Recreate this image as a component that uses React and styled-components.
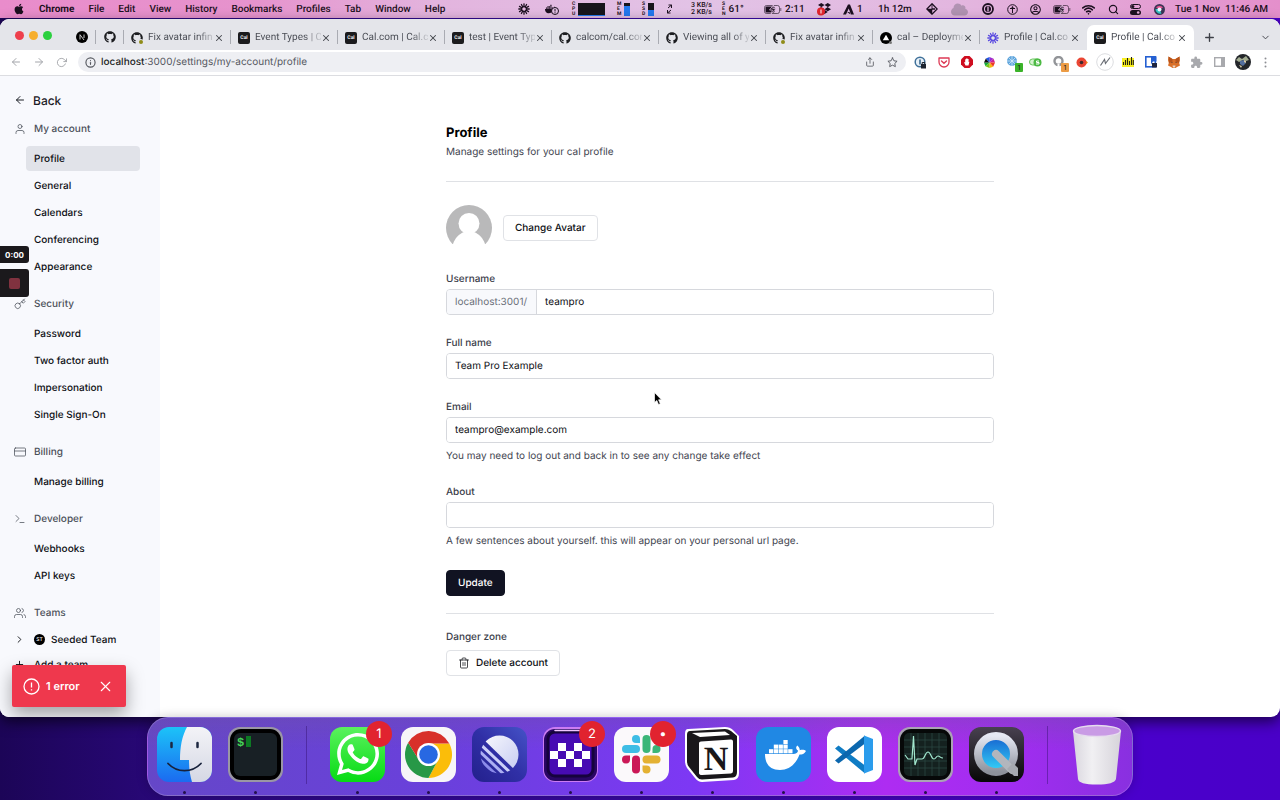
import React, { useState } from 'react'
import styled, { createGlobalStyle } from 'styled-components'
import {
  FiArrowLeft, FiArrowRight, FiUser, FiUsers, FiKey, FiCreditCard, FiTerminal, FiTrash2,
  FiChevronRight, FiChevronDown, FiPlus, FiX, FiRotateCw, FiShare, FiStar, FiInfo, FiSearch, FiWifi,
} from 'react-icons/fi'
import { FaApple, FaGithub, FaDocker, FaDropbox, FaWhatsapp, FaCloud, FaRegUserCircle } from 'react-icons/fa'
import { MdExtension } from 'react-icons/md'

const GlobalStyle = createGlobalStyle`
  * {
    box-sizing: border-box;
  }

  body {
    margin: 0;
    font-family: Inter, sans-serif;
    font-size: 10px;
    color: #111827;
    text-rendering: geometricPrecision;
  }

  button, input {
    font-family: inherit;
    text-rendering: inherit;
  }

  button {
    border: 0;
    padding: 0;
    background: none;
    color: inherit;
  }

  svg {
    flex-shrink: 0;
  }
`

const Desktop = styled.div`
  position: relative;
  display: flex;
  flex-direction: column;
  min-height: 100vh;
  overflow: hidden;
  background: linear-gradient(90deg, #1c0557 0%, #2a087c 14%, #3a08a8 60%, #4a00cc 88%, #4a00c8 100%);
`

/* Menu bar */

const MenuBar = styled.header`
  display: flex;
  align-items: center;
  justify-content: space-between;
  height: 18px;
  margin-bottom: 1px;
  padding: 0 12px 0 13px;
  font-family: Roboto, sans-serif;
  font-size: 10px;
  font-weight: 500;
  color: #1c1020;
  white-space: nowrap;
  background: linear-gradient(90deg, #e98ccb 0%, #e693cd 20%, #e3b4de 34%, #e2c3e6 55%, #e3b6df 75%, #e48fcb 100%);
`

const Menus = styled.nav`
  display: flex;
  align-items: center;
  gap: 14px;
`

const MenuItem = styled.button`
  font-size: 10px;
  font-weight: ${props => (props.$bold ? 700 : 500)};
`

const Statuses = styled.div`
  display: flex;
  align-items: center;
`

const Status = styled.span`
  display: flex;
  align-items: center;
  gap: 3px;
  width: ${props => props.$w}px;
  height: 18px;
`

const Clock = styled.time`
  font-size: 10px;
`

const Stacked = styled.span`
  display: flex;
  flex-direction: column;
  font-size: 5px;
  line-height: 5px;
  font-weight: 700;
`

const Rates = styled.span`
  font-size: 7px;
  line-height: 7px;
`

const Graph = styled.span`
  width: ${props => props.$w}px;
  height: 13px;
  background: linear-gradient(0deg, #2378ee ${props => props.$fill}%, #18151c ${props => props.$fill}%);
`

/* Browser window */

const BrowserWindow = styled.div`
  display: flex;
  flex: 1;
  flex-direction: column;
  overflow: hidden;
  border-radius: 9px;
  background: #fff;
  box-shadow: 0 5px 14px rgba(0, 0, 0, 0.6);
`

const TabStrip = styled.div`
  display: flex;
  height: 31px;
  padding-top: 6px;
  font-family: Roboto, sans-serif;
  background: #e4e5ea;
`

const Lights = styled.div`
  display: flex;
  gap: 5px;
  width: 68px;
  padding: 6px 0 0 15px;
`

const Light = styled.button`
  width: 9px;
  height: 9px;
  border-radius: 50%;
  background: ${props => props.$color};
`

const PinnedTab = styled.button`
  display: flex;
  align-items: center;
  justify-content: center;
  width: 28px;
  height: 14px;
  margin-top: 5px;
  border-right: 1px solid #a9abb2;
`

const Tab = styled.div`
  display: flex;
  flex: 0 1 107px;
  align-items: center;
  min-width: 0;
  padding: 0 7px;
  border-radius: 7px 7px 0 0;
  background: ${props => (props.$active ? '#fff' : 'transparent')};
`

const TabTitle = styled.button`
  flex: 1;
  min-width: 0;
  margin: 0 0 0 5px;
  font-size: 10px;
  line-height: 14px;
  text-align: left;
  white-space: nowrap;
  color: #4a4d55;
  mask-image: linear-gradient(90deg, #000 74%, rgba(0, 0, 0, 0.15) 100%);
`

const TabClose = styled.button`
  display: flex;
  color: #43464d;
`

const TabDivider = styled.span`
  width: 1px;
  height: 14px;
  margin: 5px 0 0 -1px;
  background: ${props => (props.$hidden ? 'transparent' : '#a9abb2')};
`

const StripButton = styled.button`
  display: flex;
  align-items: center;
  justify-content: center;
  width: 30px;
  margin-left: ${props => (props.$end ? 'auto' : '0')};
  color: #3d4047;
`

const CalIcon = styled.span`
  display: flex;
  flex-shrink: 0;
  align-items: center;
  justify-content: center;
  width: 12px;
  height: 12px;
  border-radius: 2px;
  background: #1b1b1d;
  color: #fff;
  font-size: 5px;
  font-weight: 600;
`

const Toolbar = styled.div`
  display: flex;
  align-items: center;
  height: 26px;
  padding: 0 3px 1px 4px;
  border-bottom: 1px solid #dcdde1;
  background: #fff;
`

const ToolButton = styled.button`
  position: relative;
  display: flex;
  align-items: center;
  justify-content: center;
  width: 23px;
  height: 20px;
  color: ${props => (props.$dim ? '#a3a5aa' : '#55585f')};
`

const Omnibox = styled.div`
  display: flex;
  flex: 1;
  align-items: center;
  height: 20px;
  margin: 0 3px 0 5px;
  padding: 0 2px 0 7px;
  border-radius: 10px;
  background: #eeeff3;
  color: #55585f;
`

const Address = styled.span`
  flex: 1;
  margin-left: 5px;
  font-size: 10px;
  color: #55585f;

  b {
    font-weight: 500;
    color: #1d1f24;
  }
`

const CountBadge = styled.span`
  position: absolute;
  right: 1px;
  bottom: 0;
  width: 8px;
  height: 9px;
  border-radius: 1px;
  font-size: 7px;
  line-height: 9px;
  text-align: center;
  color: #222;
  background: ${props => props.$color};
`

/* Page */

const Page = styled.div`
  position: relative;
  display: flex;
  flex: 1;
`

const Sidebar = styled.aside`
  width: 160px;
  flex-shrink: 0;
  padding: 16px 20px 0 14px;
  background: #f8f9fd;
`

const BackLink = styled.a`
  display: flex;
  align-items: center;
  gap: 7px;
  height: 16px;
  margin-bottom: 13px;
  font-size: 12px;
  font-weight: 500;
  color: #1d2026;
  text-decoration: none;
`

const Section = styled.section`
  margin-bottom: 17px;
`

const SectionTitle = styled.h2`
  display: flex;
  align-items: center;
  gap: 8px;
  height: 16px;
  margin: 0;
  font-size: 10px;
  font-weight: 500;
  color: #4b5059;
`

const NavList = styled.div`
  display: flex;
  flex-direction: column;
  gap: 2px;
  margin-top: 9px;
  padding-left: 12px;
`

const NavLink = styled.a`
  height: 25px;
  padding: 0 8px;
  border-radius: 4px;
  font-weight: 500;
  line-height: 26px;
  color: #0c0e13;
  text-decoration: none;
  background: ${props => (props.$active ? '#e1e3e9' : 'transparent')};
`

const TeamRow = styled.a`
  display: flex;
  align-items: center;
  gap: 6px;
  height: 25px;
  font-weight: 500;
  color: #0c0e13;
  text-decoration: none;

  svg {
    margin-right: 3px;
  }
`

const Teams = styled.div`
  margin-top: 6px;
`

const TeamAvatar = styled.span`
  width: 11px;
  height: 11px;
  border-radius: 50%;
  background: #000;
  color: #fff;
  font-size: 5px;
  line-height: 12px;
  text-align: center;
`

const Main = styled.main`
  flex: 1;
  padding: 48px 24px 0;
`

const Content = styled.div`
  max-width: 548px;
  margin: 0 auto;
`

const Title = styled.h1`
  margin: 0;
  font-size: 13px;
  font-weight: 700;
  line-height: 18px;
  color: #000;
`

const Hint = styled.p`
  margin: ${props => props.$top || 0}px 0 0;
  font-size: 10px;
  line-height: 16px;
  color: #3f4550;
`

const Divider = styled.hr`
  margin: ${props => props.$top}px 0 ${props => props.$bottom}px;
  border: 0;
  border-top: 1px solid #dfe1e5;
`

const AvatarRow = styled.div`
  display: flex;
  align-items: center;
  gap: 11px;
`

const Button = styled.button`
  display: flex;
  align-items: center;
  gap: 6px;
  height: 26px;
  padding: 0 11px;
  border: 1px solid ${props => (props.$primary ? '#111322' : '#e0e2e6')};
  border-radius: 4px;
  background: ${props => (props.$primary ? '#111322' : '#fff')};
  color: ${props => (props.$primary ? '#fff' : '#0c0e13')};
  font-size: 10px;
  font-weight: 500;
`

const Field = styled.div`
  margin-top: 20px;
`

const Label = styled.label`
  display: block;
  margin: 0 0 2px;
  font-size: 10px;
  font-weight: 500;
  line-height: 16px;
  color: #3b404a;
`

const InputBox = styled.div`
  display: flex;
  height: 26px;
  overflow: hidden;
  border: 1px solid #d6d8dd;
  border-radius: 4px;
`

const Prefix = styled.span`
  padding: 0 9px 0 8px;
  border-right: 1px solid #d6d8dd;
  background: #f8f9fc;
  line-height: 24px;
  color: #6b7079;
`

const Input = styled.input`
  flex: 1;
  min-width: 0;
  padding: 0 8px;
  border: 0;
  outline: 0;
  background: #fff;
  color: #0c0e13;
  font-size: 10px;
`

const Actions = styled.div`
  margin-top: 21px;
`

const DangerZone = styled.section`
  display: flex;
  flex-direction: column;
  align-items: flex-start;
  gap: 3px;
`

/* Things floating above the page */

const Recorder = styled.div`
  position: absolute;
  top: 170px;
  left: 0;
  display: flex;
  flex-direction: column;
  gap: 6px;
  width: 29px;
`

const Timer = styled.span`
  height: 17px;
  border-radius: 0 3px 3px 0;
  background: #1b191c;
  color: #fff;
  font-size: 8px;
  font-weight: 700;
  line-height: 18px;
  text-align: center;
`

const StopButton = styled.button`
  display: flex;
  align-items: center;
  justify-content: center;
  height: 28px;
  border-radius: 0 3px 3px 0;
  background: #1b191c;

  &::before {
    content: '';
    width: 11px;
    height: 11px;
    border-radius: 2px;
    background: #80323f;
  }
`

const Toast = styled.div`
  position: absolute;
  left: 12px;
  bottom: 10px;
  display: flex;
  align-items: center;
  width: 114px;
  height: 42px;
  padding: 0 12px 0 11px;
  border-radius: 2px;
  background: #ef384d;
  color: #fff;
  font-size: 11px;
  font-weight: 600;
  box-shadow: 0 8px 18px rgba(0, 0, 0, 0.35);
`

const ToastText = styled.span`
  flex: 1;
  margin-left: 6px;
`

const ToastClose = styled.button`
  display: flex;
`

const Pointer = styled.svg`
  position: absolute;
  top: 316px;
  left: 654px;
`

/* Dock */

const DockArea = styled.footer`
  position: relative;
  display: flex;
  justify-content: center;
  padding-bottom: 4px;
`

const DockBar = styled.div`
  display: flex;
  align-items: center;
  gap: 16px;
  height: 79px;
  padding: 0 9px 4px;
  border: 1px solid rgba(255, 255, 255, 0.2);
  border-radius: 21px;
  background: linear-gradient(180deg, rgba(110, 80, 160, 0.35) 0%, transparent 40%),
    linear-gradient(90deg, #6547c8 0%, #6a40dc 30%, #7d38f4 55%, #ae2cf2 75%, #a12df0 88%, #8930e0 100%);
  box-shadow: 0 0 11px rgba(0, 0, 0, 0.22);
`

const DockApp = styled.button`
  position: relative;
  height: 55px;

  svg {
    display: block;
    overflow: visible;
  }
`

const RunningDot = styled.span`
  position: absolute;
  bottom: -12px;
  left: 26px;
  width: 3px;
  height: 3px;
  border-radius: 50%;
  background: #22104a;
`

const AppBadge = styled.span`
  position: absolute;
  top: -6px;
  right: -7px;
  width: 26px;
  height: 26px;
  border-radius: 50%;
  background: #e1232f;
  color: #fff;
  font-size: 13px;
  line-height: 26px;
  text-align: center;
`

const DockLine = styled.span`
  width: 1px;
  height: 58px;
  margin: 0 7px;
  background: rgba(50, 15, 110, 0.45);
`

const GithubStatus = () => (
  <svg width="12" height="12" viewBox="0 0 12 12">
    <FaGithub size={12} color="#1c1d20" />
    <circle cx="9.5" cy="10" r="3" fill="#e4e5ea" />
    <circle cx="10" cy="10" r="2" fill="#8f8c18" />
  </svg>
)

const NextIcon = () => (
  <svg width="12" height="12" viewBox="0 0 12 12">
    <circle cx="6" cy="6" r="6" fill="#000" />
    <path d="M4 8.5V3.7L8 9M8 3.5V7" fill="none" stroke="#ddd" strokeWidth="0.9" />
  </svg>
)

const VercelIcon = () => (
  <svg width="12" height="12" viewBox="0 0 12 12">
    <circle cx="6" cy="6" r="6" fill="#000" />
    <path d="M6 2.8L9.2 8.2H2.8z" fill="#fff" />
    <circle cx="10.5" cy="10.5" r="1.5" fill="#777" />
  </svg>
)

const Burst = ({ size = 12, color = '#5b4be0', hole = 1.6 }) => (
  <svg width={size} height={size} viewBox="0 0 12 12">
    <g stroke={color} strokeWidth="1.3" strokeLinecap="round">
      {[0, 30, 60, 90, 120, 150, 180, 210, 240, 270, 300, 330].map(a => (
        <path key={a} d={`M6 ${5 - hole}V0.8`} transform={`rotate(${a} 6 6)`} />
      ))}
    </g>
    <circle cx="6" cy="6" r={hole + 0.8} fill="none" stroke={color} strokeWidth="1.2" />
  </svg>
)

const Battery = () => (
  <svg width="18" height="9" viewBox="0 0 18 9">
    <rect x="0.5" y="0.5" width="15" height="8" rx="2" fill="none" stroke="#1c1020" strokeOpacity="0.6" />
    <rect x="1.5" y="1.5" width="9" height="6" rx="1" fill="#1c1020" />
    <path d="M9.5 0L5.5 5h3L7 9l5-5.4H8.8z" fill="#1c1020" stroke="#e3bfe3" strokeWidth="0.8" />
    <path d="M16.8 3v3" stroke="#1c1020" strokeOpacity="0.6" />
  </svg>
)

const AdobeMark = () => (
  <svg width="11" height="11" viewBox="0 0 11 11">
    <path d="M0 10.5L5 0.5h2l4 10H8L5.7 4.5L3 10.5z M4.2 8h2.3l1 2.5z" fill="#1c1020" />
  </svg>
)

const statuses = [
  { w: 27, el: <Burst color="#1c1020" /> },
  { w: 27, el: (
    <svg width="14" height="12" viewBox="0 0 14 12">
      <FaDocker size={12} color="#1c1020" />
      <circle cx="10" cy="8" r="3.5" fill="#e2c0e4" stroke="#1c1020" />
      <path d="M10 6v2.5M10 9.3v1" stroke="#1c1020" />
    </svg>
  ) },
  { w: 45, el: <><Stacked><span>C</span><span>P</span><span>U</span></Stacked><Graph $w={27} $fill={7} /></> },
  { w: 25, el: <><Stacked><span>M</span><span>E</span><span>M</span></Stacked><Graph $w={6} $fill={78} /></> },
  { w: 24, el: <><Stacked><span>S</span><span>S</span><span>D</span></Stacked><Graph $w={6} $fill={50} /></> },
  { w: 25, el: (
    <svg width="7" height="10" viewBox="0 0 7 10" fill="none" stroke="#1c1020">
      <path d="M2.5 1h3v3M5.5 1L2 4M4.5 9h-3V6M1.5 9L5 6" />
    </svg>
  ) },
  { w: 31, el: <Rates>3 KB/s<br />2 KB/s</Rates> },
  { w: 42, el: <><Stacked><span>S</span><span>E</span><span>N</span></Stacked>61°</> },
  { w: 53, el: <><Battery />2:11</> },
  { w: 26, el: (
    <svg width="15" height="14" viewBox="0 0 15 14">
      <g transform="translate(1 0)"><FaDropbox size={13} color="#1c1020" /></g>
      <circle cx="4" cy="9.5" r="4" fill="#e3262e" />
      <path d="M4 7.5v4" stroke="#fff" />
    </svg>
  ) },
  { w: 35, el: <><AdobeMark />1</> },
  { w: 48, el: '1h 12m' },
  { w: 25, el: (
    <svg width="12" height="12" viewBox="0 0 12 12" fill="none" stroke="#1c1020">
      <path d="M6 0.8L11.2 6L6 11.2L0.8 6z" strokeWidth="1.3" />
      <path d="M6 1v5H1L6 11z" fill="#1c1020" strokeWidth="0.5" />
      <path d="M6 6h3" strokeWidth="1.5" />
    </svg>
  ) },
  { w: 31, el: <FaCloud size={17} color="#b193b2" /> },
  { w: 25, el: (
    <svg width="12" height="12" viewBox="0 0 12 12">
      <circle cx="6" cy="6" r="5" fill="none" stroke="#1c1020" strokeWidth="1.8" />
      <circle cx="6" cy="6" r="3" fill="#1c1020" />
      <path d="M6 3.5v5" stroke="#e7b7e0" strokeWidth="1.3" />
    </svg>
  ) },
  { w: 23, el: (
    <svg width="11" height="11" viewBox="0 0 11 11" fill="none" stroke="#1c1020">
      <circle cx="5.5" cy="5.5" r="4.8" />
      <circle cx="5.5" cy="3.3" r="0.6" fill="#1c1020" />
      <path d="M3 4.5h5M5.5 4.5V9" />
    </svg>
  ) },
  { w: 23, el: <FaRegUserCircle size={11} /> },
  { w: 29, el: <Battery /> },
  { w: 26, el: <FiWifi size={13} strokeWidth={3} /> },
  { w: 22, el: <FiSearch size={11} strokeWidth={2.5} /> },
  { w: 24, el: (
    <svg width="11" height="11" viewBox="0 0 11 11">
      <rect x="0.5" y="0.5" width="10" height="4" rx="2" fill="none" stroke="#1c1020" />
      <circle cx="2.8" cy="2.5" r="1.6" fill="#1c1020" />
      <rect x="0" y="6" width="11" height="5" rx="2.5" fill="#1c1020" />
      <circle cx="8.2" cy="8.5" r="1.3" fill="#e7b0dc" />
    </svg>
  ) },
  { w: 21, el: (
    <svg width="11" height="11" viewBox="0 0 11 11">
      <circle cx="5.5" cy="5.5" r="5.5" fill="#3c3556" />
      <path d="M2 3.5a4.5 4.5 0 0 1 7 0L5.5 5.5z" fill="#e0528f" />
      <path d="M1.5 5a4.5 4.5 0 0 0 6 4.5L5.5 5z" fill="#35c3c4" />
      <circle cx="5.5" cy="5.5" r="2" fill="#eef5ff" />
    </svg>
  ) },
]

const menus = ['Chrome', 'File', 'Edit', 'View', 'History', 'Bookmarks', 'Profiles', 'Tab', 'Window', 'Help']

const tabs = [
  { title: 'Fix avatar infin', icon: <GithubStatus /> },
  { title: 'Event Types | C', icon: <CalIcon>Cal</CalIcon> },
  { title: 'Cal.com | Cal.c', icon: <CalIcon>Cal</CalIcon> },
  { title: 'test | Event Typ', icon: <CalIcon>Cal</CalIcon> },
  { title: 'calcom/cal.con', icon: <FaGithub size={12} color="#1c1d20" /> },
  { title: 'Viewing all of y', icon: <FaGithub size={12} color="#1c1d20" /> },
  { title: 'Fix avatar infin', icon: <GithubStatus /> },
  { title: 'cal – Deployme', icon: <VercelIcon /> },
  { title: 'Profile | Cal.co', icon: <Burst /> },
  { title: 'Profile | Cal.co', icon: <CalIcon>Cal</CalIcon>, active: true },
]

const extensions = [
  { name: '1Password', icon: (
    <svg width="13" height="13" viewBox="0 0 13 13">
      <circle cx="6" cy="6" r="4.8" fill="#e8f1f8" stroke="#40719a" strokeWidth="1.5" />
      <path d="M6 3.5v5" stroke="#2c5c85" strokeWidth="1.5" />
      <rect x="7" y="8" width="5" height="4.5" fill="#1e2530" />
      <path d="M8.2 8V6.5h2.6V8" fill="none" stroke="#1e2530" />
    </svg>
  ) },
  { name: 'Pocket', icon: (
    <svg width="12" height="11" viewBox="0 0 12 11" fill="none" stroke="#dd3a55">
      <path d="M1 1h10v4a5 5 0 0 1-10 0z" strokeWidth="1.3" strokeLinejoin="round" />
      <path d="M3.5 4L6 6.3L8.5 4" strokeWidth="1.4" strokeLinecap="round" />
    </svg>
  ) },
  { name: 'AdBlock', icon: (
    <svg width="12" height="12" viewBox="0 0 12 12">
      <path d="M3.5 0h5L12 3.5v5L8.5 12h-5L0 8.5v-5z" fill="#cf0d1f" />
      <path d="M4.5 9.5L3 6.3h1.2V3.3h.9V2.5h1.5v.5h1V6l.8-.3L7.5 9.5z" fill="#fff" />
    </svg>
  ) },
  { name: 'Color picker', icon: (
    <svg width="11" height="11" viewBox="0 0 12 12">
      <path d="M6 6L6 0L10.5 2z" fill="#9d2bd0" />
      <path d="M6 6L10.5 2L12 6z" fill="#d0208e" />
      <path d="M6 6h6l-2 4.5z" fill="#ee3b24" />
      <path d="M6 6l4 4.5L6 12z" fill="#f8b50b" />
      <path d="M6 6v6l-4.5-2z" fill="#7cc812" />
      <path d="M6 6l-4.5 4L0 6z" fill="#16ac3c" />
      <path d="M6 6H0l2-4.5z" fill="#111" />
      <path d="M6 6L2 1.5L6 0z" fill="#2255e4" />
    </svg>
  ) },
  { name: 'Network', badge: '1', color: '#3bb329', icon: (
    <svg width="12" height="12" viewBox="0 0 12 12">
      <circle cx="5" cy="5" r="5" fill="#5fa5dc" />
      <path d="M5 0v10M0 5h10M1.5 1.5l7 7M8.5 1.5l-7 7" stroke="#dceefb" strokeWidth="0.7" />
    </svg>
  ) },
  { name: 'Toggle', icon: (
    <svg width="13" height="9" viewBox="0 0 13 9">
      <rect x="0.5" y="1" width="11" height="6" rx="3" fill="#d5f3cf" stroke="#67c45c" />
      <circle cx="8.5" cy="4.5" r="4" fill="#4cb944" />
      <path d="M10 3H7.5v1.5H10V6H7" fill="none" stroke="#fff" />
    </svg>
  ) },
  { name: 'Tracker', badge: '1', color: '#ec9c45', icon: (
    <svg width="12" height="12" viewBox="0 0 12 12">
      <circle cx="5.5" cy="5" r="4" fill="none" stroke="#929498" strokeWidth="2.4" />
      <path d="M5.5 8v4" stroke="#fff" strokeWidth="2" />
    </svg>
  ) },
  { name: 'Duck', icon: (
    <svg width="12" height="11" viewBox="0 0 12 11">
      <path d="M8 2l4 3.5L8 9z" fill="#f7a21b" />
      <circle cx="5.5" cy="5.5" r="5" fill="#ea4634" />
      <circle cx="5.5" cy="5.5" r="1.8" fill="#40282b" />
    </svg>
  ) },
  { name: 'Analytics', icon: (
    <svg width="18" height="18" viewBox="0 0 18 18">
      <circle cx="9" cy="9" r="8.3" fill="#fff" stroke="#dcdde0" />
      <path d="M4.5 12.5L8.5 6.5L9.5 10.5L14 4.5" fill="none" stroke="#6a6e75" strokeWidth="1.2" />
    </svg>
  ) },
  { name: 'Sound', icon: (
    <svg width="12" height="10" viewBox="0 0 12 10">
      <rect y="1" width="12" height="9" fill="#f8ee22" />
      <path d="M1.5 5v3M3.5 3v5M5.5 1v7M7.5 4v4M9.5 0v8M11.3 3v5" stroke="#25240e" strokeWidth="1.1" />
    </svg>
  ) },
  { name: 'Bitwarden', icon: (
    <svg width="12" height="12" viewBox="0 0 12 12">
      <rect x="0.8" y="0.8" width="9.5" height="10" fill="#fff" stroke="#2560d2" strokeWidth="1.6" />
      <path d="M6 0.5h5.5v5H8l-2 3z" fill="#2560d2" />
      <rect x="7" y="7" width="5" height="4.5" fill="#1e2540" />
    </svg>
  ) },
  { name: 'MetaMask', icon: (
    <svg width="12" height="12" viewBox="0 0 12 12">
      <path d="M0.5 0.5L4.5 3h3l4-2.5L12 4l-.8 3 .8 2.5-3 1.5-1.5 1h-3L3 11 0 9.5.8 7 0 4z" fill="#d96f28" />
      <path d="M0.5 0.5L4.5 3v3L1 7zM11.5 0.5L7.5 3v3L11 7z" fill="#b6531a" />
      <path d="M4.5 9.5h3L7 11.5H5z" fill="#e8d5c5" />
      <path d="M3.5 6l1.5 1H3.5zM8.5 6L7 7h1.5z" fill="#30333b" />
    </svg>
  ) },
  { name: 'Extensions', icon: <MdExtension size={13} color="#a8a9ad" /> },
  { name: 'Side panel', icon: (
    <svg width="11" height="10" viewBox="0 0 11 10">
      <rect x="0.7" y="0.7" width="9.6" height="8.6" fill="none" stroke="#a8a9ad" strokeWidth="1.4" />
      <path d="M7 0h4v10H7z" fill="#a8a9ad" />
    </svg>
  ) },
  { name: 'You', icon: (
    <svg width="16" height="16" viewBox="0 0 16 16">
      <circle cx="8" cy="8" r="8" fill="#23262a" />
      <path d="M1 6l3-3 3 2 4-3 3 4-3 1-3-1-4 2z" fill="#a3ad92" />
      <path d="M5 7l4-1 2 3-3 3-3-2z" fill="#54709f" />
      <path d="M9 6l2 1v2l-2-1zM4 11l3 1-1 2z" fill="#d9cda6" />
    </svg>
  ) },
  { name: 'Menu', icon: (
    <svg width="3" height="11" viewBox="0 0 3 11" fill="#8d8f94">
      <circle cx="1.5" cy="1.5" r="1" /><circle cx="1.5" cy="5.5" r="1" /><circle cx="1.5" cy="9.5" r="1" />
    </svg>
  ) },
]

const sections = [
  { title: 'My account', Icon: FiUser, items: ['Profile', 'General', 'Calendars', 'Conferencing', 'Appearance'] },
  { title: 'Security', Icon: FiKey, items: ['Password', 'Two factor auth', 'Impersonation', 'Single Sign-On'] },
  { title: 'Billing', Icon: FiCreditCard, items: ['Manage billing'] },
  { title: 'Developer', Icon: FiTerminal, items: ['Webhooks', 'API keys'] },
]

// Every dock drawing uses the same 55 unit tile
const Tile = ({ fill, children }) => (
  <svg width="55" height="55" viewBox="0 0 55 55">
    {fill && <rect width="55" height="55" rx="12" fill={fill} />}
    {children}
  </svg>
)

const Finder = () => (
  <Tile fill="url(#finderBlue)">
    <defs>
      <linearGradient id="finderBlue" x1="0" y1="0" x2="0" y2="1">
        <stop offset="0" stopColor="#1cc3f8" /><stop offset="1" stopColor="#1b6bf0" />
      </linearGradient>
      <linearGradient id="finderWhite" x1="0" y1="0" x2="0" y2="1">
        <stop offset="0" stopColor="#f3f3f7" /><stop offset="1" stopColor="#d5d8e4" />
      </linearGradient>
    </defs>
    <path d="M30 0H43a12 12 0 0 1 12 12V43a12 12 0 0 1-12 12H35C33 48 32 42 32 33H23C23 20 25 9 30 0z" fill="url(#finderWhite)" />
    <path d="M14.5 16v4M40.5 16v4" stroke="#1c2740" strokeWidth="2.5" strokeLinecap="round" />
    <path d="M11 36.5C20 46 35 46 44 36.5" fill="none" stroke="#17213a" strokeWidth="1.8" strokeLinecap="round" />
  </Tile>
)

const TerminalApp = () => (
  <Tile fill="#9a96a4">
    <rect x="2" y="2" width="51" height="51" rx="11" fill="#000" />
    <rect x="6" y="6" width="43" height="43" rx="6" fill="#182025" />
    <text x="9" y="19" fontFamily="Liberation Mono, monospace" fontSize="12" fontWeight="700" fill="#45d457">$</text>
    <rect x="18" y="9" width="5" height="11" fill="#0d7a24" />
  </Tile>
)

const WhatsappApp = () => (
  <Tile fill="url(#waGreen)">
    <defs>
      <linearGradient id="waGreen" x1="0" y1="0" x2="0" y2="1">
        <stop offset="0" stopColor="#5bf25e" /><stop offset="1" stopColor="#06db14" />
      </linearGradient>
    </defs>
    <g transform="translate(4 3)"><FaWhatsapp size={48} color="#fff" /></g>
  </Tile>
)

const ChromeApp = () => (
  <Tile fill="#f7f5f8">
    <path d="M27.5 16.5H48.3A23.5 23.5 0 0 1 27.5 51L37 33z" fill="#fbbd09" />
    <path d="M7.15 15.75L18 33L27.5 38.5L37 33L27.5 51A23.5 23.5 0 0 1 7.15 15.75z" fill="#279847" />
    <path d="M7.15 15.75A23.5 23.5 0 0 1 48.3 16.5H27.5L18 33z" fill="#d8302a" />
    <circle cx="27.5" cy="27.5" r="11.5" fill="#fff" />
    <circle cx="27.5" cy="27.5" r="9.3" fill="#2868e2" />
  </Tile>
)

const LinearApp = () => (
  <Tile fill="url(#linearBg)">
    <defs>
      <linearGradient id="linearBg" x1="1" y1="0" x2="0" y2="1">
        <stop offset="0" stopColor="#4553c8" /><stop offset="0.5" stopColor="#302fa6" /><stop offset="1" stopColor="#23208c" />
      </linearGradient>
      <linearGradient id="moon" x1="0" y1="0" x2="1" y2="1">
        <stop offset="0" stopColor="#fff" /><stop offset="1" stopColor="#bcc2ef" />
      </linearGradient>
      <clipPath id="moonClip"><circle cx="27.5" cy="27.5" r="19" /></clipPath>
    </defs>
    <g clipPath="url(#moonClip)">
      <path d="M9 10L14 0H55V50L46 46z" fill="url(#moon)" />
      <path d="M5 14L43 50" stroke="#cdd0f8" strokeWidth="3" />
      <path d="M3 20L39 54" stroke="#acaff3" strokeWidth="3" />
      <path d="M2 27L32 55" stroke="#8b8bea" strokeWidth="3" />
    </g>
  </Tile>
)

const CheckerApp = () => (
  <Tile fill="#cb7cf2">
    <rect x="1" y="2" width="53" height="52" rx="11" fill="#290664" />
    <rect x="5" y="5" width="45" height="44" rx="7" fill="#470bb3" stroke="#16033d" strokeWidth="3" />
    <path d="M12 3.5H44" stroke="#f0c5ff" strokeWidth="1.5" strokeLinecap="round" />
    <g fill="#fff">
      {[[1, 0], [3, 0], [0, 1], [2, 1], [4, 1], [1, 2], [3, 2]].map(([x, y]) => (
        <rect key={`${x}-${y}`} x={7 + x * 8} y={16 + y * 8} width="8" height="8" />
      ))}
    </g>
  </Tile>
)

const SlackApp = () => (
  <Tile fill="#fbf9fb">
    <g fill="#3ebde5">
      <rect x="8" y="18" width="18" height="8" rx="4" />
      <path d="M26 16h-4a4 4 0 1 1 4-4z" />
    </g>
    <g fill="#3bb678">
      <rect x="28.5" y="8" width="8" height="18" rx="4" />
      <path d="M38.5 26v-4a4 4 0 1 1 4 4z" />
    </g>
    <g fill="#e4b133">
      <rect x="28.5" y="28.5" width="18" height="8" rx="4" />
      <path d="M28.5 38.5h4a4 4 0 1 1-4 4z" />
    </g>
    <g fill="#cb1857">
      <rect x="18" y="28.5" width="8" height="18" rx="4" />
      <path d="M16 28.5v4a4 4 0 1 1-4-4z" />
    </g>
  </Tile>
)

const NotionApp = () => (
  <Tile>
    <path d="M3 2L40 0Q45 0 48 3L54 9V46Q54 52 49 53L17 55Q13 55 10 51L2 41Q0 38 0 34V7Q0 2 3 2z" fill="#fff" />
    <path d="M5 4L40 2Q43 2 46 4L52 9V45Q52 50 48 50.5L17 52.5Q14 52.5 12 50L4 40Q2 38 2 34V8Q2 4 5 4z" fill="#19171a" />
    <path d="M7 6L40 4.5L45 8L15 10z" fill="#fff" />
    <path d="M14 16Q14 14.5 16 14.5L46 12.5Q48 12.5 48 14.5V44Q48 46 46 46.5L17 48Q14 48 14 46z" fill="#fff" />
    <text x="31" y="43" textAnchor="middle" fontFamily="Liberation Serif, serif" fontSize="34" fontWeight="700" fill="#19171a">N</text>
  </Tile>
)

const DockerApp = () => (
  <Tile fill="#2088e4">
    <path d="M9 27H37C40 27 42 25.5 42 23.5C39.5 22 39.8 19.5 41.5 18.5C43 20 43.8 21.5 43.8 23.2C46 22.5 49 22.8 50 24C48.5 27 46 27.5 43.5 27.5C40 37 33 43 24 43C14 43 9 37 9 27z" fill="#fff" />
    <g fill="#fff">
      {[[0, 2], [1, 2], [2, 2], [3, 2], [4, 2], [1, 1], [2, 1], [3, 1], [3, 0]].map(([x, y]) => (
        <rect key={`${x}-${y}`} x={13 + x * 4.8} y={13 + y * 4.6} width="4.3" height="4.1" />
      ))}
    </g>
  </Tile>
)

const CodeApp = () => (
  <Tile fill="#fff">
    <path d="M8 21.5L11.5 18.5L38 38.5V46.5z" fill="#0f7cc4" />
    <path d="M8 33.5L11.5 36.5L38 16.5V8.5z" fill="#0b67ae" />
    <path d="M37 8.5L46 12V43L37 46.5z" fill="#2a9cec" />
  </Tile>
)

const ActivityApp = () => (
  <Tile fill="#aaa2b4">
    <rect x="2" y="2" width="51" height="51" rx="11" fill="#060808" />
    <rect x="6" y="6" width="43" height="43" rx="5" fill="#14211f" />
    <path d="M6 13h43M6 20h43M6 27h43M6 34h43M6 41h43M13 6v43M20 6v43M27 6v43M34 6v43M41 6v43" stroke="#2c4a46" strokeWidth="0.7" />
    <path d="M7 28l3 4h4l1.5-23L17 38l2-6h5c3 0 3-7 6-7s3 7 6 7c2 0 2-3 4-3s2 2 5 2" fill="none" stroke="#a2e8cf" strokeWidth="1.2" />
  </Tile>
)

const QuickTimeApp = () => (
  <Tile fill="url(#qtBg)">
    <defs>
      <linearGradient id="qtBg" x1="0" y1="0" x2="0" y2="1">
        <stop offset="0" stopColor="#484150" /><stop offset="1" stopColor="#070707" />
      </linearGradient>
      <linearGradient id="qtRing" x1="0" y1="0" x2="0" y2="1">
        <stop offset="0" stopColor="#e6e8f4" /><stop offset="1" stopColor="#8d919b" />
      </linearGradient>
      <linearGradient id="qtBlue" x1="0" y1="0" x2="0" y2="1">
        <stop offset="0" stopColor="#1661cf" /><stop offset="1" stopColor="#35d6f9" />
      </linearGradient>
    </defs>
    <circle cx="27" cy="27" r="18" fill="url(#qtBlue)" stroke="url(#qtRing)" strokeWidth="8" />
    <path d="M27 27L43 43" stroke="#b2b6bd" strokeWidth="8" strokeLinecap="round" />
    <path d="M38 42l6-6 5 5v8h-4z" fill="#a6a9b0" />
  </Tile>
)

const TrashCan = () => (
  <svg width="52" height="60" viewBox="0 0 52 60">
    <defs>
      <linearGradient id="can" x1="0" y1="0" x2="1" y2="0">
        <stop offset="0" stopColor="#d9d6de" /><stop offset="0.4" stopColor="#f1f0f3" /><stop offset="1" stopColor="#d6d3da" />
      </linearGradient>
    </defs>
    <path d="M2 4L7 52Q7.5 57.5 26 57.5Q43.5 57.5 45 52L50 4z" fill="url(#can)" />
    <ellipse cx="26" cy="4" rx="23.5" ry="5.5" fill="#c99be5" stroke="#e6dcee" strokeWidth="1.5" />
  </svg>
)

const dockApps = [
  { name: 'Finder', App: Finder },
  { name: 'Terminal', App: TerminalApp, lineAfter: true },
  { name: 'WhatsApp', App: WhatsappApp, badge: '1' },
  { name: 'Google Chrome', App: ChromeApp },
  { name: 'Linear', App: LinearApp },
  { name: 'Checker', App: CheckerApp, badge: '2' },
  { name: 'Slack', App: SlackApp, badge: '•' },
  { name: 'Notion', App: NotionApp },
  { name: 'Docker', App: DockerApp },
  { name: 'Code', App: CodeApp },
  { name: 'Activity Monitor', App: ActivityApp },
  { name: 'QuickTime', App: QuickTimeApp, lineAfter: true },
]

const ProfileForm = () => {
  const [form, setForm] = useState({
    username: 'teampro',
    name: 'Team Pro Example',
    email: 'teampro@example.com',
    about: '',
  })

  const onChange = (e) => setForm({ ...form, [e.target.id]: e.target.value })

  return (
    <form onSubmit={e => e.preventDefault()}>
      <Field>
        <Label htmlFor="username">Username</Label>
        <InputBox>
          <Prefix>localhost:3001/</Prefix>
          <Input id="username" value={form.username} onChange={onChange} />
        </InputBox>
      </Field>
      <Field>
        <Label htmlFor="name">Full name</Label>
        <InputBox><Input id="name" value={form.name} onChange={onChange} /></InputBox>
      </Field>
      <Field>
        <Label htmlFor="email">Email</Label>
        <InputBox><Input id="email" type="email" value={form.email} onChange={onChange} /></InputBox>
        <Hint $top={5}>You may need to log out and back in to see any change take effect</Hint>
      </Field>
      <Field>
        <Label htmlFor="about">About</Label>
        <InputBox><Input id="about" value={form.about} onChange={onChange} /></InputBox>
        <Hint $top={5}>A few sentences about yourself. this will appear on your personal url page.</Hint>
      </Field>
      <Actions>
        <Button $primary type="submit">Update</Button>
      </Actions>
    </form>
  )
}

const App = () => {
  const [current, setCurrent] = useState('Profile')
  const [showError, setShowError] = useState(true)

  return (
    <Desktop>
      <GlobalStyle />
      <MenuBar>
        <Menus>
          <FaApple size={12} />
          {menus.map((name, index) => (
            <MenuItem key={name} $bold={index === 0}>{name}</MenuItem>
          ))}
        </Menus>
        <Statuses>
          {statuses.map((status, index) => (
            <Status key={index} $w={status.w}>{status.el}</Status>
          ))}
          <Status $w={93}><Clock>Tue 1 Nov&nbsp; 11:46 AM</Clock></Status>
        </Statuses>
      </MenuBar>

      <BrowserWindow>
        <TabStrip>
          <Lights>
            <Light $color="#ee3f4c" aria-label="Close" />
            <Light $color="#f6ae2d" aria-label="Minimise" />
            <Light $color="#2bd03f" aria-label="Zoom" />
          </Lights>
          <PinnedTab aria-label="Next.js"><NextIcon /></PinnedTab>
          <PinnedTab aria-label="GitHub"><FaGithub size={12} color="#1c1d20" /></PinnedTab>
          {tabs.map((tab, index) => (
            <React.Fragment key={index}>
              <Tab $active={tab.active}>
                {tab.icon}
                <TabTitle>{tab.title}</TabTitle>
                <TabClose aria-label="Close tab"><FiX size={10} strokeWidth={2.5} /></TabClose>
              </Tab>
              <TabDivider $hidden={index >= tabs.length - 2} />
            </React.Fragment>
          ))}
          <StripButton aria-label="New tab"><FiPlus size={13} strokeWidth={2.5} /></StripButton>
          <StripButton $end aria-label="Search tabs"><FiChevronDown size={11} /></StripButton>
        </TabStrip>

        <Toolbar>
          <ToolButton $dim aria-label="Back"><FiArrowLeft size={12} /></ToolButton>
          <ToolButton $dim aria-label="Forward"><FiArrowRight size={12} /></ToolButton>
          <ToolButton $dim aria-label="Reload"><FiRotateCw size={11} /></ToolButton>
          <Omnibox>
            <FiInfo size={11} strokeWidth={2.5} />
            <Address><b>localhost</b>:3000/settings/my-account/profile</Address>
            <ToolButton aria-label="Share"><FiShare size={10} /></ToolButton>
            <ToolButton aria-label="Bookmark"><FiStar size={11} /></ToolButton>
          </Omnibox>
          {extensions.map(ext => (
            <ToolButton key={ext.name} aria-label={ext.name}>
              {ext.icon}
              {ext.badge && <CountBadge $color={ext.color}>{ext.badge}</CountBadge>}
            </ToolButton>
          ))}
        </Toolbar>

        <Page>
          <Sidebar>
            <BackLink href="#"><FiArrowLeft size={12} />Back</BackLink>
            {sections.map(({ title, Icon, items }) => (
              <Section key={title}>
                <SectionTitle><Icon size={12} strokeWidth={1.5} />{title}</SectionTitle>
                <NavList>
                  {items.map(item => (
                    <NavLink key={item} href="#" $active={item === current} onClick={() => setCurrent(item)}>
                      {item}
                    </NavLink>
                  ))}
                </NavList>
              </Section>
            ))}
            <SectionTitle><FiUsers size={12} strokeWidth={1.5} />Teams</SectionTitle>
            <Teams>
              <TeamRow href="#"><FiChevronRight size={11} /><TeamAvatar>ST</TeamAvatar>Seeded Team</TeamRow>
              <TeamRow href="#"><FiPlus size={11} />Add a team</TeamRow>
            </Teams>
          </Sidebar>

          <Main>
            <Content>
              <Title>Profile</Title>
              <Hint $top={2}>Manage settings for your cal profile</Hint>
              <Divider $top={21} $bottom={23} />
              <AvatarRow>
                <svg width="46" height="46" viewBox="0 0 46 46">
                  <defs><clipPath id="avatarClip"><path d="M0 0h46v39H0z" /></clipPath></defs>
                  <g clipPath="url(#avatarClip)">
                    <circle cx="23" cy="23" r="23" fill="#b9b9ba" />
                    <circle cx="23" cy="18.5" r="10.5" fill="#fff" />
                    <path d="M7 39C9 33 13 29 18 27h10c5 2 9 6 11 12z" fill="#fff" />
                  </g>
                </svg>
                <Button>Change Avatar</Button>
              </AvatarRow>
              <ProfileForm />
              <Divider $top={17} $bottom={15} />
              <DangerZone>
                <Label as="h2">Danger zone</Label>
                <Button><FiTrash2 size={12} strokeWidth={1.5} />Delete account</Button>
              </DangerZone>
            </Content>
          </Main>

          <Recorder>
            <Timer>0:00</Timer>
            <StopButton aria-label="Stop recording" />
          </Recorder>

          {showError && (
            <Toast role="alert">
              <svg width="17" height="17" viewBox="0 0 17 17" fill="none" stroke="#fff" strokeWidth="1.3">
                <circle cx="8.5" cy="8.5" r="7.5" />
                <path d="M8.5 4.5v5M8.5 11.2v1.3" />
              </svg>
              <ToastText>1 error</ToastText>
              <ToastClose aria-label="Dismiss" onClick={() => setShowError(false)}>
                <FiX size={17} strokeWidth={1.5} />
              </ToastClose>
            </Toast>
          )}

          <Pointer width="9" height="14" viewBox="0 0 9 14">
            <path d="M0.5 0.5V10.5L2.8 8.5L4.5 12.5L6.3 11.7L4.6 7.8H7.5z" fill="#000" stroke="#fff" strokeWidth="0.7" />
          </Pointer>
        </Page>
      </BrowserWindow>

      <DockArea>
        <DockBar>
          {dockApps.map(({ name, App: AppIcon, badge, lineAfter }) => (
            <React.Fragment key={name}>
              <DockApp aria-label={name}>
                <AppIcon />
                {badge && <AppBadge>{badge}</AppBadge>}
                <RunningDot />
              </DockApp>
              {lineAfter && <DockLine />}
            </React.Fragment>
          ))}
          <DockApp aria-label="Trash"><TrashCan /></DockApp>
        </DockBar>
      </DockArea>
    </Desktop>
  )
}

export default App
